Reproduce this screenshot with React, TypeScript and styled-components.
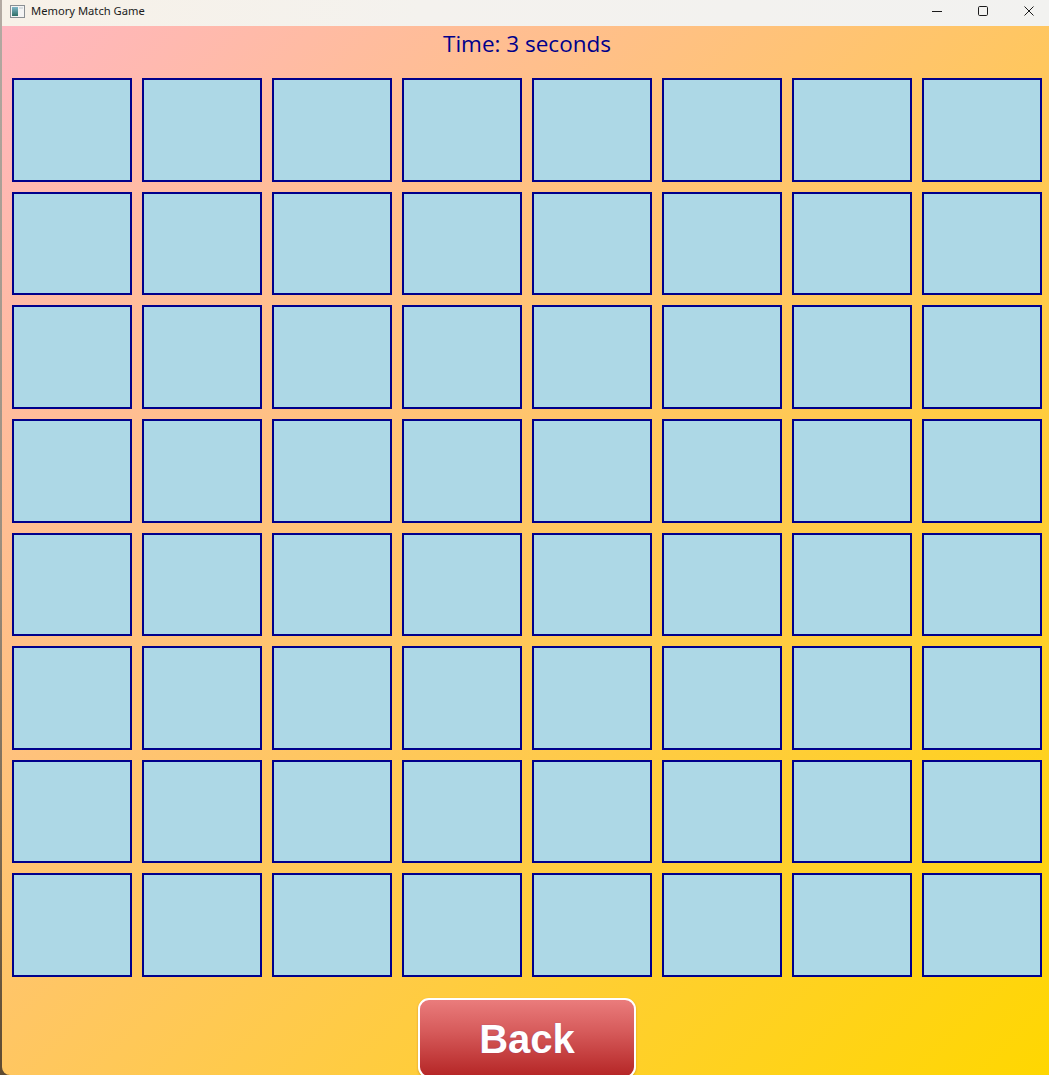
import React from "react";
import styled, { createGlobalStyle } from "styled-components";

const Global = createGlobalStyle`
  html, body {
    margin: 0;
    padding: 0;
    width: 1049px;
    height: 1075px;
    overflow: hidden;
    background: linear-gradient(180deg, #b3aaa3 0%, #9c8f80 50%, #5e4a30 100%);
  }
  * { box-sizing: border-box; }
`;

const Window = styled.div`
  margin-left: 2px;
  width: 1050px;
  height: 1075px;
  display: flex;
  flex-direction: column;
  overflow: hidden;
  border-radius: 0 0 0 8px;
`;

const TitleBar = styled.div`
  height: 26px;
  flex: none;
  display: flex;
  align-items: center;
  background: linear-gradient(90deg, #f7f1e8 0%, #f4f2ee 40%, #f2f2f0 100%);
  font-family: "Noto Sans", "Open Sans", sans-serif;
  font-size: 11.2px;
  color: #1b1b1b;
  padding-bottom: 4px;
`;

const AppIcon = styled.svg`
  margin-left: 8px;
  margin-right: 6px;
  flex: none;
`;

const TitleText = styled.span`
  flex: 1;
  line-height: 16px;
`;

const Caption = styled.div`
  width: 46px;
  height: 22px;
  display: flex;
  align-items: center;
  justify-content: center;
  flex: none;
`;

const Content = styled.div`
  flex: 1;
  display: flex;
  flex-direction: column;
  align-items: center;
  background: linear-gradient(to bottom right, #ffb6c1 0%, #ffd700 100%);
`;

const Timer = styled.div`
  height: 47px;
  width: 100%;
  display: flex;
  justify-content: center;
  padding-top: 3px;
  font-family: "Open Sans", "Noto Sans", sans-serif;
  font-size: 22.5px;
  line-height: 30px;
  color: #00008b;
`;

const Board = styled.div`
  width: 1040px;
  height: 909px;
  display: grid;
  grid-template-columns: repeat(8, 1fr);
  grid-template-rows: repeat(8, 1fr);
`;

const Card = styled.div`
  margin: 5px;
  background: #add8e6;
  border: 2px solid #00008b;
`;

const BackButton = styled.button`
  margin-top: 16px;
  width: 218px;
  height: 80px;
  flex: none;
  border: 2px solid #ffffff;
  border-radius: 11px;
  background: linear-gradient(180deg, #ea7c7c 0%, #d75c5c 40%, #b52626 100%);
  color: #ffffff;
  font-family: "Liberation Sans", Arial, sans-serif;
  font-weight: 700;
  font-size: 40px;
  padding: 2px 0 0 0;
  text-shadow: 0 0 1px rgba(90, 40, 160, 0.6);
  box-shadow: 0 1px 2px rgba(120, 40, 20, 0.35);
  cursor: pointer;
`;

const MinIcon = () => (
  <svg width="10" height="10" viewBox="0 0 10 10">
    <line x1="0" y1="5.5" x2="10" y2="5.5" stroke="#1b1b1b" strokeWidth="1" />
  </svg>
);

const MaxIcon = () => (
  <svg width="10" height="10" viewBox="0 0 10 10">
    <rect x="0.5" y="0.5" width="9" height="9" rx="1.2" fill="none" stroke="#1b1b1b" strokeWidth="1" />
  </svg>
);

const CloseIcon = () => (
  <svg width="10" height="10" viewBox="0 0 10 10">
    <path d="M0.5 0.5 L9.5 9.5 M9.5 0.5 L0.5 9.5" stroke="#1b1b1b" strokeWidth="1" />
  </svg>
);

export default function App() {
  const cards = Array.from({ length: 64 }, (_, i) => i);
  return (
    <>
      <Global />
      <Window>
        <TitleBar>
          <AppIcon width="15" height="13" viewBox="0 0 15 13">
            <defs>
              <linearGradient id="ig" x1="0" y1="0" x2="0" y2="1">
                <stop offset="0" stopColor="#7fb6c9" />
                <stop offset="1" stopColor="#2e6f66" />
              </linearGradient>
            </defs>
            <rect x="0.5" y="0.5" width="14" height="12" fill="#f4f4f4" stroke="#8a8f94" />
            <rect x="2" y="2" width="6" height="9" fill="url(#ig)" />
            <rect x="9" y="2" width="4" height="2" fill="#d9dde0" />
          </AppIcon>
          <TitleText>Memory Match Game</TitleText>
          <Caption><MinIcon /></Caption>
          <Caption><MaxIcon /></Caption>
          <Caption><CloseIcon /></Caption>
        </TitleBar>
        <Content>
          <Timer>Time: 3 seconds</Timer>
          <Board>
            {cards.map((i) => (
              <Card key={i} />
            ))}
          </Board>
          <BackButton>Back</BackButton>
        </Content>
      </Window>
    </>
  );
}
